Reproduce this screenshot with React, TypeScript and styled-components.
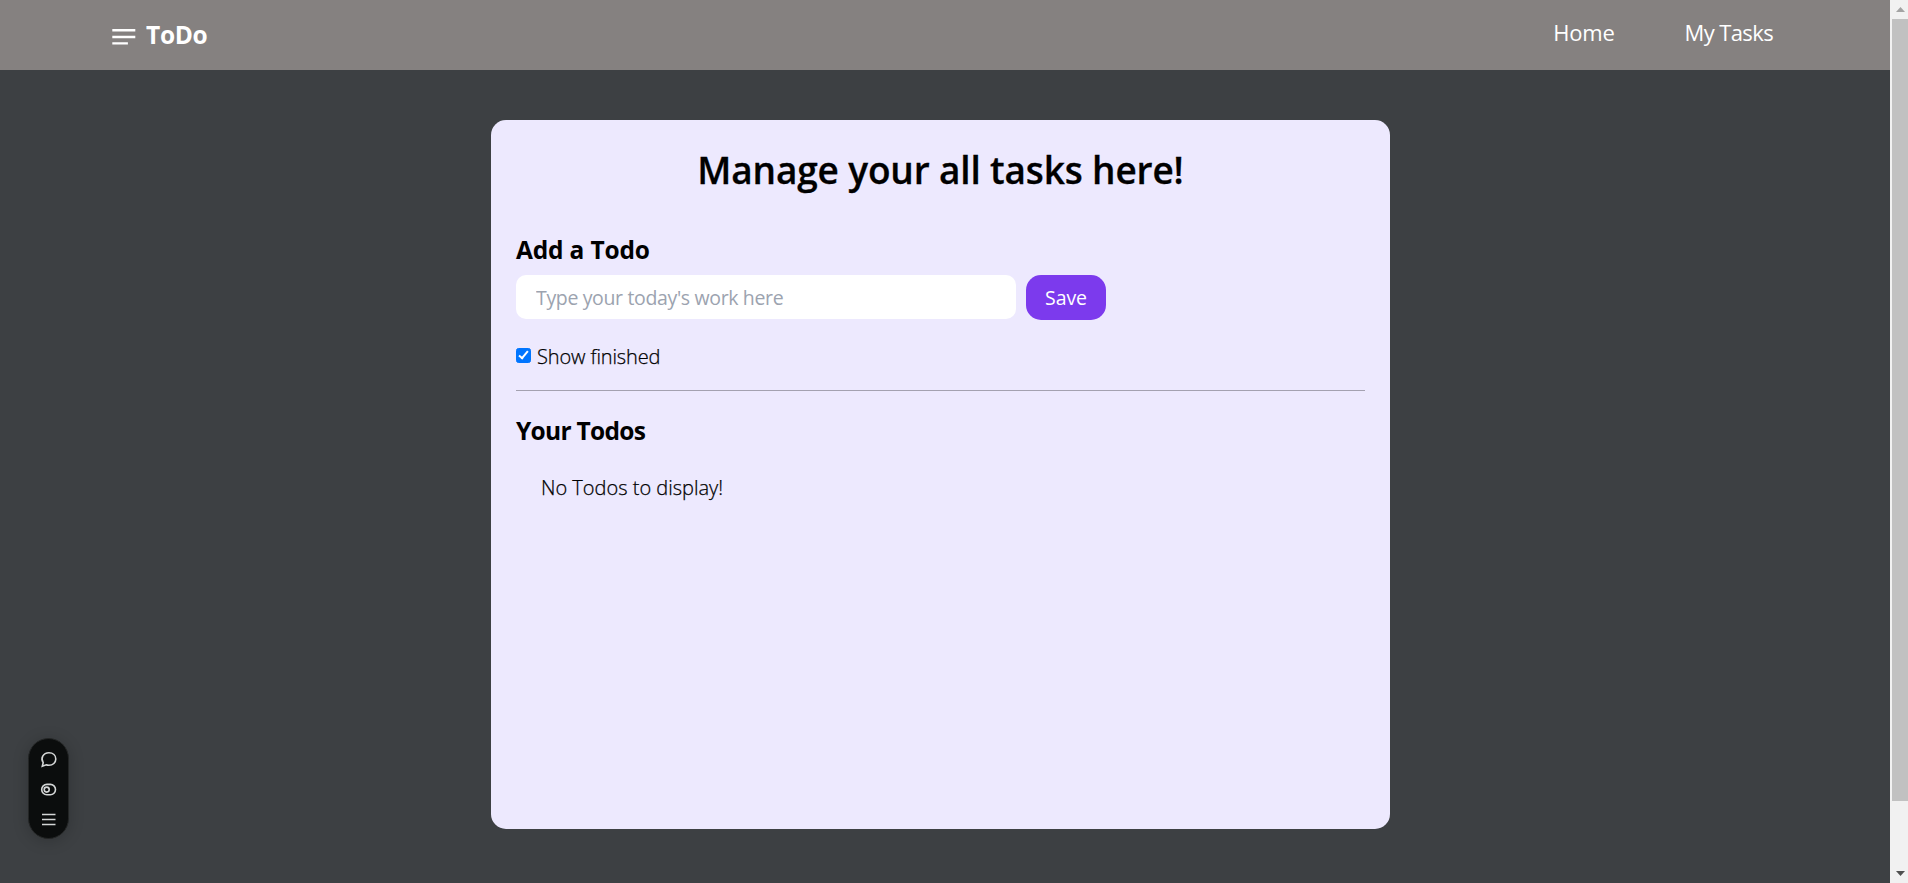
import React, { useState } from 'react';
import styled, { createGlobalStyle } from 'styled-components';

const GlobalStyle = createGlobalStyle`
  *, *::before, *::after { box-sizing: border-box; }
  body {
    margin: 0;
    overflow: hidden;
    background: #3d4043;
    font-family: "Open Sans", "Noto Sans", sans-serif;
  }
  h1, h2, p { margin: 0; }
`;

const Window = styled.div`
  display: flex;
  width: 100%;
  height: 100vh;
`;

const Page = styled.div`
  flex: 1;
  min-width: 0;
  background: #3d4043;
`;

const Navbar = styled.nav`
  display: flex;
  justify-content: space-between;
  height: 70px;
  padding: 0 117px 0 110px;
  background: #858180;
  color: #fff;
`;

const Brand = styled.div`
  display: flex;
  align-items: center;
  gap: 9px;
  height: 70px;
  padding-bottom: 1px;
  font-size: 24.5px;
  font-weight: 700;
  line-height: 35px;
  letter-spacing: -0.3px;
`;

const BrandIcon = styled.svg`
  width: 27px;
  height: 27px;
  margin-top: 6px;
`;

const NavLinks = styled.div`
  display: flex;
  gap: 70px;
  padding-top: 16px;
`;

const NavLink = styled.a<{ $spacing: number }>`
  color: #fff;
  font-size: 22px;
  line-height: 32px;
  letter-spacing: ${({ $spacing }) => $spacing}px;
  text-decoration: none;
`;

const Card = styled.main`
  width: 899px;
  height: 709px;
  margin: 50px auto 0 491px;
  padding: 25px;
  border-radius: 15px;
  background: #ede9fe;
  color: #000;
`;

const Title = styled.h1`
  font-size: 37px;
  font-weight: 600;
  line-height: 50px;
  letter-spacing: -0.15px;
  text-align: center;
  -webkit-text-stroke: 0.3px #000;
`;

const Heading = styled.h2<{ $spacing: number }>`
  font-size: 24.5px;
  font-weight: 700;
  line-height: 35px;
  letter-spacing: ${({ $spacing }) => $spacing}px;
`;

const AddSection = styled.section`
  display: flex;
  flex-direction: column;
  gap: 8px;
  margin-top: 37px;
`;

const InputRow = styled.form`
  display: flex;
  align-items: flex-start;
  gap: 10px;
`;

const TodoInput = styled.input`
  width: 500px;
  height: 44px;
  padding: 0 20px;
  border: 0;
  border-radius: 10px;
  outline: none;
  background: #fff;
  font: 400 19.5px/30px "Open Sans", "Noto Sans", sans-serif;
  letter-spacing: -0.35px;
  &::placeholder { color: #9ca3af; opacity: 1; }
`;

const SaveButton = styled.button`
  width: 80px;
  height: 45px;
  padding: 0;
  border: 0;
  border-radius: 15px;
  background: #7c3aed;
  color: #fff;
  font: 400 19.5px/30px "Open Sans", "Noto Sans", sans-serif;
  letter-spacing: -0.1px;
`;

const FilterLabel = styled.label`
  display: flex;
  align-items: center;
  gap: 6px;
  height: 30px;
  margin-top: 21px;
  font-size: 20px;
  font-weight: 300;
  letter-spacing: -0.12px;
  -webkit-text-stroke: 0.25px #000;
`;

const Checkbox = styled.input`
  appearance: none;
  display: grid;
  place-items: center;
  width: 15px;
  height: 15px;
  margin: 0 0 2px;
  border: 1px solid #767676;
  border-radius: 2.5px;
  background: #fff;
  &:checked {
    border-color: #0075ff;
    background: #0075ff;
  }
  &:checked::after {
    content: "";
    width: 5px;
    height: 10px;
    margin-top: -2px;
    border: solid #fff;
    border-width: 0 2.4px 2.4px 0;
    transform: rotate(40deg);
  }
`;

const Divider = styled.hr`
  height: 1px;
  margin: 19px 0 22px;
  border: 0;
  background: #a4a1b0;
`;

const EmptyText = styled.p`
  margin: 25px 0 0 25px;
  font-size: 20px;
  font-weight: 300;
  line-height: 30px;
  -webkit-text-stroke: 0.25px #000;
`;

const Toolbar = styled.aside`
  position: fixed;
  left: 28px;
  top: 738px;
  display: flex;
  flex-direction: column;
  align-items: center;
  width: 41px;
  height: 101px;
  padding: 12px 0;
  gap: 13px;
  border: 1px solid #242626;
  border-radius: 21px;
  background: #0b0d0d;
  box-shadow: 0 2px 16px rgba(0, 0, 0, 0.2);
`;

const ToolIcon = styled.svg`
  display: block;
  flex: none;
  width: 17px;
  height: 17px;
  fill: none;
  stroke: #d4d6d6;
  stroke-width: 1.6;
`;

const Scrollbar = styled.div`
  display: flex;
  flex-direction: column;
  width: 18px;
  height: 100%;
  padding-left: 2px;
  background: #f1f1f1;
`;

const ScrollArrow = styled.svg<{ $color: string }>`
  display: block;
  flex: none;
  width: 16px;
  height: 19px;
  fill: ${({ $color }) => $color};
`;

const ScrollTrack = styled.div`
  flex: 1;
`;

const ScrollThumb = styled.div`
  height: 782px;
  background: #c1c1c1;
`;

export default function App() {
  const [text, setText] = useState('');
  const [showFinished, setShowFinished] = useState(true);
  return (
    <>
      <GlobalStyle />
      <Window>
        <Page>
          <Navbar>
            <Brand>
              <BrandIcon viewBox="0 0 27 27" fill="#fff">
                <path d="M2.3 5h23v2.4h-23zM2.3 11.8h23v2.4h-23zM2.3 18.2h15.6v2.4H2.3z" />
              </BrandIcon>
              ToDo
            </Brand>
            <NavLinks>
              <NavLink $spacing={-0.2}>Home</NavLink>
              <NavLink $spacing={-0.62}>My Tasks</NavLink>
            </NavLinks>
          </Navbar>
          <Card>
            <Title>Manage your all tasks here!</Title>
            <AddSection>
              <Heading $spacing={-0.17}>Add a Todo</Heading>
              <InputRow onSubmit={(e) => e.preventDefault()}>
                <TodoInput
                  value={text}
                  onChange={(e) => setText(e.target.value)}
                  placeholder="Type your today's work here"
                />
                <SaveButton>Save</SaveButton>
              </InputRow>
            </AddSection>
            <FilterLabel>
              <Checkbox
                type="checkbox"
                checked={showFinished}
                onChange={() => setShowFinished(!showFinished)}
              />
              Show finished
            </FilterLabel>
            <Divider />
            <Heading $spacing={-0.7}>Your Todos</Heading>
            <EmptyText>No Todos to display!</EmptyText>
          </Card>
        </Page>
        <Scrollbar>
          <ScrollArrow $color="#a3a3a3" viewBox="0 0 16 19">
            <path d="M8.5 7 13 12H4z" />
          </ScrollArrow>
          <ScrollTrack>
            <ScrollThumb />
          </ScrollTrack>
          <ScrollArrow $color="#505050" viewBox="0 0 16 19">
            <path d="M4 7h9l-4.5 5z" />
          </ScrollArrow>
        </Scrollbar>
      </Window>
      <Toolbar>
        <ToolIcon viewBox="0 0 17 17">
          <path d="M2.3 15.2 3.2 11.6C.3 7.5 3 1.7 8.9 1.7c4.100 0 6.900 2.700 6.900 6.300s-2.900 6.300-6.900 6.300c-1 0-1.900-.1-2.700-.5z" />
        </ToolIcon>
        <ToolIcon viewBox="0 0 17 17">
          <rect x="1.7" y="3.4" width="13.8" height="10.4" rx="5.2" />
          <circle cx="6.7" cy="8.6" r="2.5" />
        </ToolIcon>
        <ToolIcon viewBox="0 0 17 17">
          <path d="M2 3.5h13.5M2 8.5h13.5M2 13.5h13.5" />
        </ToolIcon>
      </Toolbar>
    </>
  );
}
